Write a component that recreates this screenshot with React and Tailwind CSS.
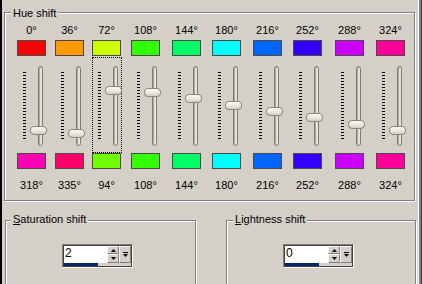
import React from "react";

const cols = [
  { top: "0°", tc: "bg-[#ff0000]", bot: "318°", bc: "bg-[#ff00b3]", thumb: "top-[70px]", w: "w-[38px]" },
  { top: "36°", tc: "bg-[#ff9900]", bot: "335°", bc: "bg-[#ff006a]", thumb: "top-[73px]", w: "w-[37px]" },
  { top: "72°", tc: "bg-[#ccff00]", bot: "94°", bc: "bg-[#6fff00]", thumb: "top-[30px]", w: "w-[39px]", focus: true },
  { top: "108°", tc: "bg-[#33ff00]", bot: "108°", bc: "bg-[#33ff00]", thumb: "top-[32px]", w: "w-[41px]" },
  { top: "144°", tc: "bg-[#00ff66]", bot: "144°", bc: "bg-[#00ff66]", thumb: "top-[38px]", w: "w-[40px]" },
  { top: "180°", tc: "bg-[#00ffff]", bot: "180°", bc: "bg-[#00ffff]", thumb: "top-[45px]", w: "w-[41px]" },
  { top: "216°", tc: "bg-[#0066ff]", bot: "216°", bc: "bg-[#0066ff]", thumb: "top-[51px]", w: "w-[40px]" },
  { top: "252°", tc: "bg-[#3300ff]", bot: "252°", bc: "bg-[#3300ff]", thumb: "top-[57px]", w: "w-[42px]" },
  { top: "288°", tc: "bg-[#cc00ff]", bot: "288°", bc: "bg-[#cc00ff]", thumb: "top-[64px]", w: "w-[41px]" },
  { top: "324°", tc: "bg-[#ff0099]", bot: "324°", bc: "bg-[#ff0099]", thumb: "top-[70px]", w: "w-[29px]" },
];

const ticks = Array.from({ length: 23 }, (_, i) => i);

function Column({ c }) {
  return (
    <div className={`flex flex-col shrink-0 ${c.w}`}>
      <div className="mt-[11px] w-[29px] h-[13px] leading-[13px] text-center">{c.top}</div>
      <div className={`mt-[3px] w-[29px] h-[16px] border border-[#4a4a4a] ${c.tc}`} />
      <div className="relative w-[29px] h-[97px]">
        {c.focus && (
          <div className="absolute left-0 top-[1px] w-[30px] h-[96px] border border-dotted border-black" />
        )}
        <div className="absolute left-[6px] top-[16px] w-[3px] flex flex-col gap-[2px]">
          {ticks.map((t) => (
            <div key={t} className="h-[1px] w-[3px] bg-black" />
          ))}
        </div>
        <div className="absolute left-[21px] top-[10px] w-[5px] h-[80px] rounded-full border border-[#7c7c78] bg-[#e4e2dc] shadow-[inset_1px_1px_0_#a8a6a0]" />
        <div
          className={`absolute left-[13px] ${c.thumb} w-[17px] h-[9px] rounded-[4px] border border-[#8a877c] bg-[linear-gradient(to_bottom,#fbfaf6,#e8e5da_60%,#cfcbbd)]`}
        />
      </div>
      <div className={`w-[29px] h-[16px] border border-[#4a4a4a] ${c.bc}`} />
      <div className="mt-[10px] w-[29px] h-[13px] leading-[13px] text-center">{c.bot}</div>
    </div>
  );
}

function SpinBox({ value }) {
  return (
    <div className="w-[71px] h-[24px] border border-t-[#808080] border-l-[#808080] border-b-[#ffffff] border-r-[#ffffff]">
      <div className="w-[69px] h-[22px] border border-[#404040] flex flex-col">
        <div className="flex h-[17px]">
          <div className="flex-1 bg-white text-[12px] leading-[15px] pl-[1px] text-black">{value}</div>
          <div className="w-[12px] flex flex-col bg-white">
            <div className="h-[8px] bg-[#d4d0c8] border border-t-white border-l-white border-b-[#808080] border-r-[#808080] flex items-center justify-center">
              <svg width="5" height="3" viewBox="0 0 5 3"><path d="M2.5 0 L5 3 L0 3 Z" fill="#000" /></svg>
            </div>
            <div className="h-[9px] bg-[#d4d0c8] border border-t-white border-l-white border-b-[#808080] border-r-[#808080] flex items-center justify-center">
              <svg width="5" height="3" viewBox="0 0 5 3"><path d="M0 0 L5 0 L2.5 3 Z" fill="#000" /></svg>
            </div>
          </div>
          <div className="w-[12px] bg-[#d4d0c8] border border-t-white border-l-white border-b-[#808080] border-r-[#808080] flex flex-col items-center justify-center gap-[1px]">
            <div className="w-[5px] h-[1px] bg-black" />
            <svg width="5" height="3" viewBox="0 0 5 3"><path d="M0 0 L5 0 L2.5 3 Z" fill="#000" /></svg>
          </div>
        </div>
        <div className="flex h-[3px]">
          <div className="w-[34px] bg-[#0a246a]" />
          <div className="flex-1 bg-[#d4d0c8]" />
        </div>
      </div>
    </div>
  );
}

export default function App() {
  return (
    <div className="relative w-[422px] h-[284px] overflow-hidden bg-[#d4d0c8] text-[11px] text-black font-['Liberation_Sans',Arial,sans-serif] shadow-[inset_2px_0_0_#000,inset_-1px_0_0_#404040,inset_-3px_0_0_#808080,inset_-4px_0_0_#fff]">
      <div className="relative mt-[12px] ml-[4px] w-[411px] h-[189px] border border-[#808080] shadow-[inset_1px_1px_0_#fff,1px_1px_0_#fff]">
        <span className="absolute -top-[6px] left-[6px] px-[2px] bg-[#d4d0c8] leading-[13px]">Hue shift</span>
        <div className="flex pl-[12px]">
          {cols.map((c, i) => (
            <Column key={i} c={c} />
          ))}
        </div>
      </div>
      <div className="flex mt-[19px] ml-[5px] gap-[30px]">
        <div className="relative w-[191px] h-[70px] border border-[#808080] shadow-[inset_1px_1px_0_#fff,1px_1px_0_#fff] pt-[23px] pl-[56px]">
          <span className="absolute -top-[8px] left-[5px] px-[2px] bg-[#d4d0c8] leading-[13px]">
            <span className="underline underline-offset-[1px]">S</span>aturation shift
          </span>
          <SpinBox value="2" />
        </div>
        <div className="relative w-[190px] h-[70px] border border-[#808080] shadow-[inset_1px_1px_0_#fff,1px_1px_0_#fff] pt-[23px] pl-[56px]">
          <span className="absolute -top-[8px] left-[6px] px-[2px] bg-[#d4d0c8] leading-[13px]">
            <span className="underline underline-offset-[1px]">L</span>ightness shift
          </span>
          <SpinBox value="0" />
        </div>
      </div>
    </div>
  );
}
